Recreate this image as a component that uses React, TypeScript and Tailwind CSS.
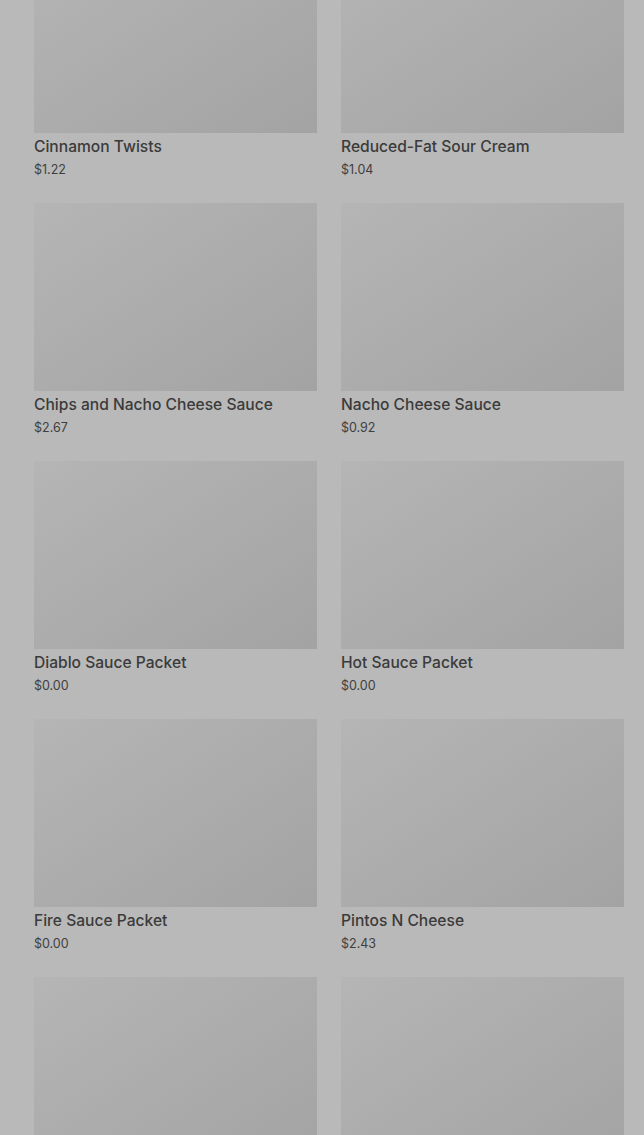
import React from 'react';

type Item = { name?: string; price?: string };

const items: Item[] = [
  { name: 'Cinnamon Twists', price: '$1.22' },
  { name: 'Reduced-Fat Sour Cream', price: '$1.04' },
  { name: 'Chips and Nacho Cheese Sauce', price: '$2.67' },
  { name: 'Nacho Cheese Sauce', price: '$0.92' },
  { name: 'Diablo Sauce Packet', price: '$0.00' },
  { name: 'Hot Sauce Packet', price: '$0.00' },
  { name: 'Fire Sauce Packet', price: '$0.00' },
  { name: 'Pintos N Cheese', price: '$2.43' },
  // below the fold, only the images show
  {},
  {},
];

const ProductCard: React.FC<{ item: Item }> = ({ item }) => (
  <div>
    <div className="h-[188px] w-full bg-gradient-to-br from-[#b5b5b5] to-[#a3a3a3]" />
    {item.name && (
      <>
        <h3 className="mt-[4px] text-[15.6px] leading-[20px] font-medium text-[#3b3b3b]">
          {item.name}
        </h3>
        <p className="mt-[4px] text-[12.5px] leading-[18px] text-[#3f3f3f]">{item.price}</p>
      </>
    )}
  </div>
);

const App: React.FC = () => {
  return (
    <div
      className="h-[1135px] overflow-hidden bg-[#b9b9b9]"
      style={{ fontFamily: 'Inter, "Noto Sans", sans-serif' }}
    >
      <div className="mt-[-55px] grid grid-cols-2 gap-x-[24px] gap-y-[24px] pl-[34px] pr-[20px]">
        {items.map((item, i) => (
          <ProductCard key={i} item={item} />
        ))}
      </div>
    </div>
  );
};

export default App;
